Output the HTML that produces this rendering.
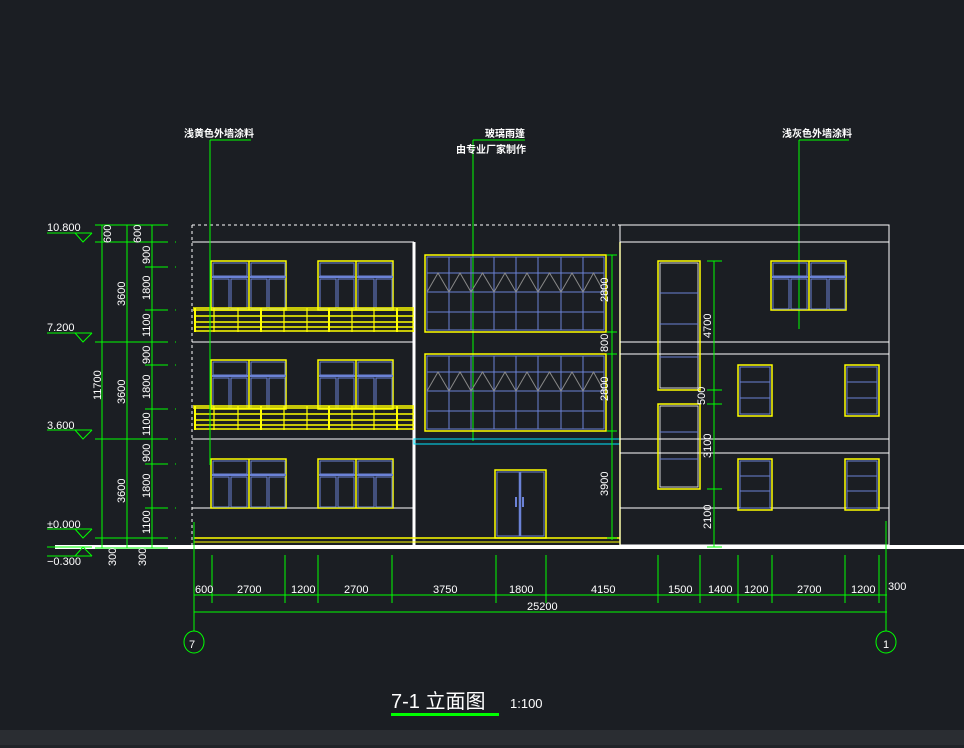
<!DOCTYPE html>
<html><head><meta charset="utf-8"><style>
html,body{margin:0;padding:0;background:#1b1e23;width:964px;height:748px;overflow:hidden}
svg{display:block}
text{font-family:"Liberation Sans","Noto Sans CJK SC",sans-serif;fill:#fff}
.d{font-size:11px}
.c{font-size:10px;font-weight:bold}
</style></head><body>
<svg id="s" width="964" height="748" viewBox="0 0 964 748" xmlns="http://www.w3.org/2000/svg">
<rect x="0" y="730" width="964" height="18" fill="#2a2d32"/>
<rect x="0" y="745" width="964" height="3" fill="#202328"/>
<g id="g" fill="none" stroke-width="1"></g>

<!-- level labels -->
<text x="47" y="231" class="d">10.800</text>
<text x="47" y="331" class="d">7.200</text>
<text x="47" y="429" class="d">3.600</text>
<text x="47" y="528" class="d">±0.000</text>
<text x="47" y="565" class="d">−0.300</text>

<!-- vertical dim labels -->
<g class="d">
<text transform="translate(111,243) rotate(-90)">600</text>
<text transform="translate(141,243) rotate(-90)">600</text>
<text transform="translate(125,306) rotate(-90)">3600</text>
<text transform="translate(125,404) rotate(-90)">3600</text>
<text transform="translate(125,503) rotate(-90)">3600</text>
<text transform="translate(101,400) rotate(-90)">11700</text>
<text transform="translate(150,264) rotate(-90)">900</text>
<text transform="translate(150,300) rotate(-90)">1800</text>
<text transform="translate(150,337) rotate(-90)">1100</text>
<text transform="translate(150,364) rotate(-90)">900</text>
<text transform="translate(150,399) rotate(-90)">1800</text>
<text transform="translate(150,436) rotate(-90)">1100</text>
<text transform="translate(150,462) rotate(-90)">900</text>
<text transform="translate(150,498) rotate(-90)">1800</text>
<text transform="translate(150,534) rotate(-90)">1100</text>
<text transform="translate(116,566) rotate(-90)">300</text>
<text transform="translate(146,566) rotate(-90)">300</text>
<text transform="translate(608,302) rotate(-90)">2800</text>
<text transform="translate(608,352) rotate(-90)">800</text>
<text transform="translate(608,401) rotate(-90)">2800</text>
<text transform="translate(608,496) rotate(-90)">3900</text>
<text transform="translate(711,338) rotate(-90)">4700</text>
<text transform="translate(705,405) rotate(-90)">500</text>
<text transform="translate(711,458) rotate(-90)">3100</text>
<text transform="translate(711,529) rotate(-90)">2100</text>
</g>

<!-- callouts -->
<text x="184" y="137" class="c">浅黄色外墙涂料</text>
<text x="485" y="137" class="c">玻璃雨篷</text>
<text x="456" y="153" class="c">由专业厂家制作</text>
<text x="782" y="137" class="c">浅灰色外墙涂料</text>

<!-- bottom dims -->
<g class="d">
<text x="195" y="593">600</text>
<text x="237" y="593">2700</text>
<text x="291" y="593">1200</text>
<text x="344" y="593">2700</text>
<text x="433" y="593">3750</text>
<text x="509" y="593">1800</text>
<text x="591" y="593">4150</text>
<text x="668" y="593">1500</text>
<text x="708" y="593">1400</text>
<text x="744" y="593">1200</text>
<text x="797" y="593">2700</text>
<text x="851" y="593">1200</text>
<text x="888" y="590">300</text>
<text x="527" y="610">25200</text>
<text x="189" y="648">7</text>
<text x="883" y="648">1</text>
</g>
<text x="391" y="708" style="font-size:20px">7-1  立面图</text>
<text x="510" y="708" style="font-size:13px">1:100</text>
<rect x="391" y="713" width="108" height="3" fill="#00ff00"/>
</svg>
<script>
var G=document.getElementById('g'),h='';
var W='#ffffff',Y='#ffff00',B='#6b82d6',GR='#00ff00',C='#00e5ff',GY='#888';
function L(x1,y1,x2,y2,c,w,da){h+='<line x1="'+x1+'" y1="'+y1+'" x2="'+x2+'" y2="'+y2+'" stroke="'+c+'" stroke-width="'+(w||1)+'"'+(da?' stroke-dasharray="'+da+'"':'')+'/>';}
function R(x,y,w,hh,c,sw){h+='<rect x="'+x+'" y="'+y+'" width="'+w+'" height="'+hh+'" stroke="'+c+'" stroke-width="'+(sw||1)+'" fill="none"/>';}
// ground
L(55,547,964,547,W,4);
// level marks
[[233,242],[333,342],[430,439],[529,538],[547,556]].forEach(function(p,i){
 L(47,p[0],92,p[0],GR);
 if(i<4){h+='<polyline points="75,'+p[0]+' 83,'+p[1]+' 92,'+p[0]+'" stroke="'+GR+'" fill="none"/>';}
 else {L(47,565-9,92,556,GR);h+='<polyline points="75,556 83,547 92,556" stroke="'+GR+'" fill="none"/>';}
});
// vertical dim lines
L(102,225,102,548,GR);L(127,225,127,548,GR);L(152,225,152,548,GR);
[225,242,342,439,538,548].forEach(function(y){L(95,y,168,y,GR);});
[267,310,365,409,464,508].forEach(function(y){L(145,y,168,y,GR);});
// dots
[242,267,310,342,365,409,439,464,508,538].forEach(function(y){L(175,y,176,y,GR);});
// left block
L(192,225,620,225,W,1,'3,3');L(192,225,192,545,W,1,'3,3');
[242,342,439,508].forEach(function(y){L(192,y,414,y,W);});
L(414,242,414,545,W,3);
// windows left
function win(x,y){ // two units, 75x49
 R(x,y,75,49,Y,1.5);L(x+38,y,x+38,y+49,Y,1.5);
 for(var u=0;u<2;u++){var ux=x+u*38;R(ux+2,y+2,34,13,B);
  L(ux+1,y+16,ux+37,y+16,B,2);R(ux+2,y+18,16,30,B);R(ux+20,y+18,16,30,B);}
}
[261,360,459].forEach(function(y){win(211,y);win(318,y);});
// railings
function rail(y){L(193,y,414,y,Y,1.5);L(193,y+2,414,y+2,Y,1.5);
 [8,14,19,23].forEach(function(d){L(195,y+d,414,y+d,Y,1.5);});
 [195,214,238,261,284,307,329,352,374,397,413].forEach(function(x,i){L(x,y,x,y+24,Y,i%3==0?2:1.2);});}
rail(308);rail(406);
L(194,538,414,538,Y,1.5);L(194,542,620,542,Y,1);L(414,538,620,538,Y,1.5);
L(194,522,194,631,GR);
// leader lines
L(210,140,210,465,GR);L(210,140,251,140,GR);
L(473,140,473,441,GR);L(473,140,525,140,GR);
L(799,140,799,329,GR);L(799,140,849,140,GR);
// curtain walls
function cw(y){R(425,y,181,77,Y,1.5);R(427,y+2,177,73,B);
 [449,471,494,516,538,561,583].forEach(function(x){L(x,y+2,x,y+75,B);});
 [18,37,57].forEach(function(d){L(427,y+d,604,y+d,B);});
 var pts='';[427,449,471,494,516,538,561,583,604].forEach(function(x,i,a){if(i<a.length-1){var m=(x+a[i+1])/2;pts+=x+','+(y+37)+' '+m+','+(y+18)+' ';}});pts+='604,'+(y+37);
 h+='<polyline points="'+pts+'" stroke="'+GY+'" fill="none"/>';}
cw(255);cw(354);
R(414,439,206,5,C);
// door
R(495,470,51,68,Y,1.5);R(497,472,47,64,B);L(520,472,520,536,B,2.5);L(516,497,516,507,B,2);L(523,497,523,507,B,2);
L(620,242,620,545,Y,1.5);
L(612,255,612,540,GR);[255,332,354,431,538].forEach(function(y){L(607,y,617,y,GR);});
// right block
R(620,225,269,320,W);
[242,342,354,439,453,508].forEach(function(y){L(620,y,889,y,W);});
function tall(y,hh,lines){R(658,y,42,hh,Y,1.5);R(660,y+2,38,hh-4,W,0.8);lines.forEach(function(l){L(660,l,698,l,B);});}
tall(261,129,[293,324,357]);tall(404,85,[432,459]);
win(771,261);
function sw(x,y,lines){R(x,y,34,51,Y,1.5);R(x+2,y+2,30,47,B);lines.forEach(function(l){L(x+2,l,x+32,l,B);});}
sw(738,365,[382,398]);sw(845,365,[382,398]);sw(738,459,[476,491]);sw(845,459,[476,491]);
L(714,261,714,547,GR);[261,390,404,489,547].forEach(function(y){L(707,y,722,y,GR);});
// bottom dims
L(194,595,887,595,GR);L(194,612,887,612,GR);
[194,212,285,318,392,496,546,658,700,738,772,845,879,886].forEach(function(x){L(x,555,x,603,GR);});
L(194,595,194,631,GR);L(886,521,886,631,GR);
h+='<ellipse cx="194" cy="642" rx="10" ry="11" stroke="'+GR+'" fill="none"/>';
h+='<ellipse cx="886" cy="642" rx="10" ry="11" stroke="'+GR+'" fill="none"/>';
G.innerHTML=h;
</script>
</body></html>
